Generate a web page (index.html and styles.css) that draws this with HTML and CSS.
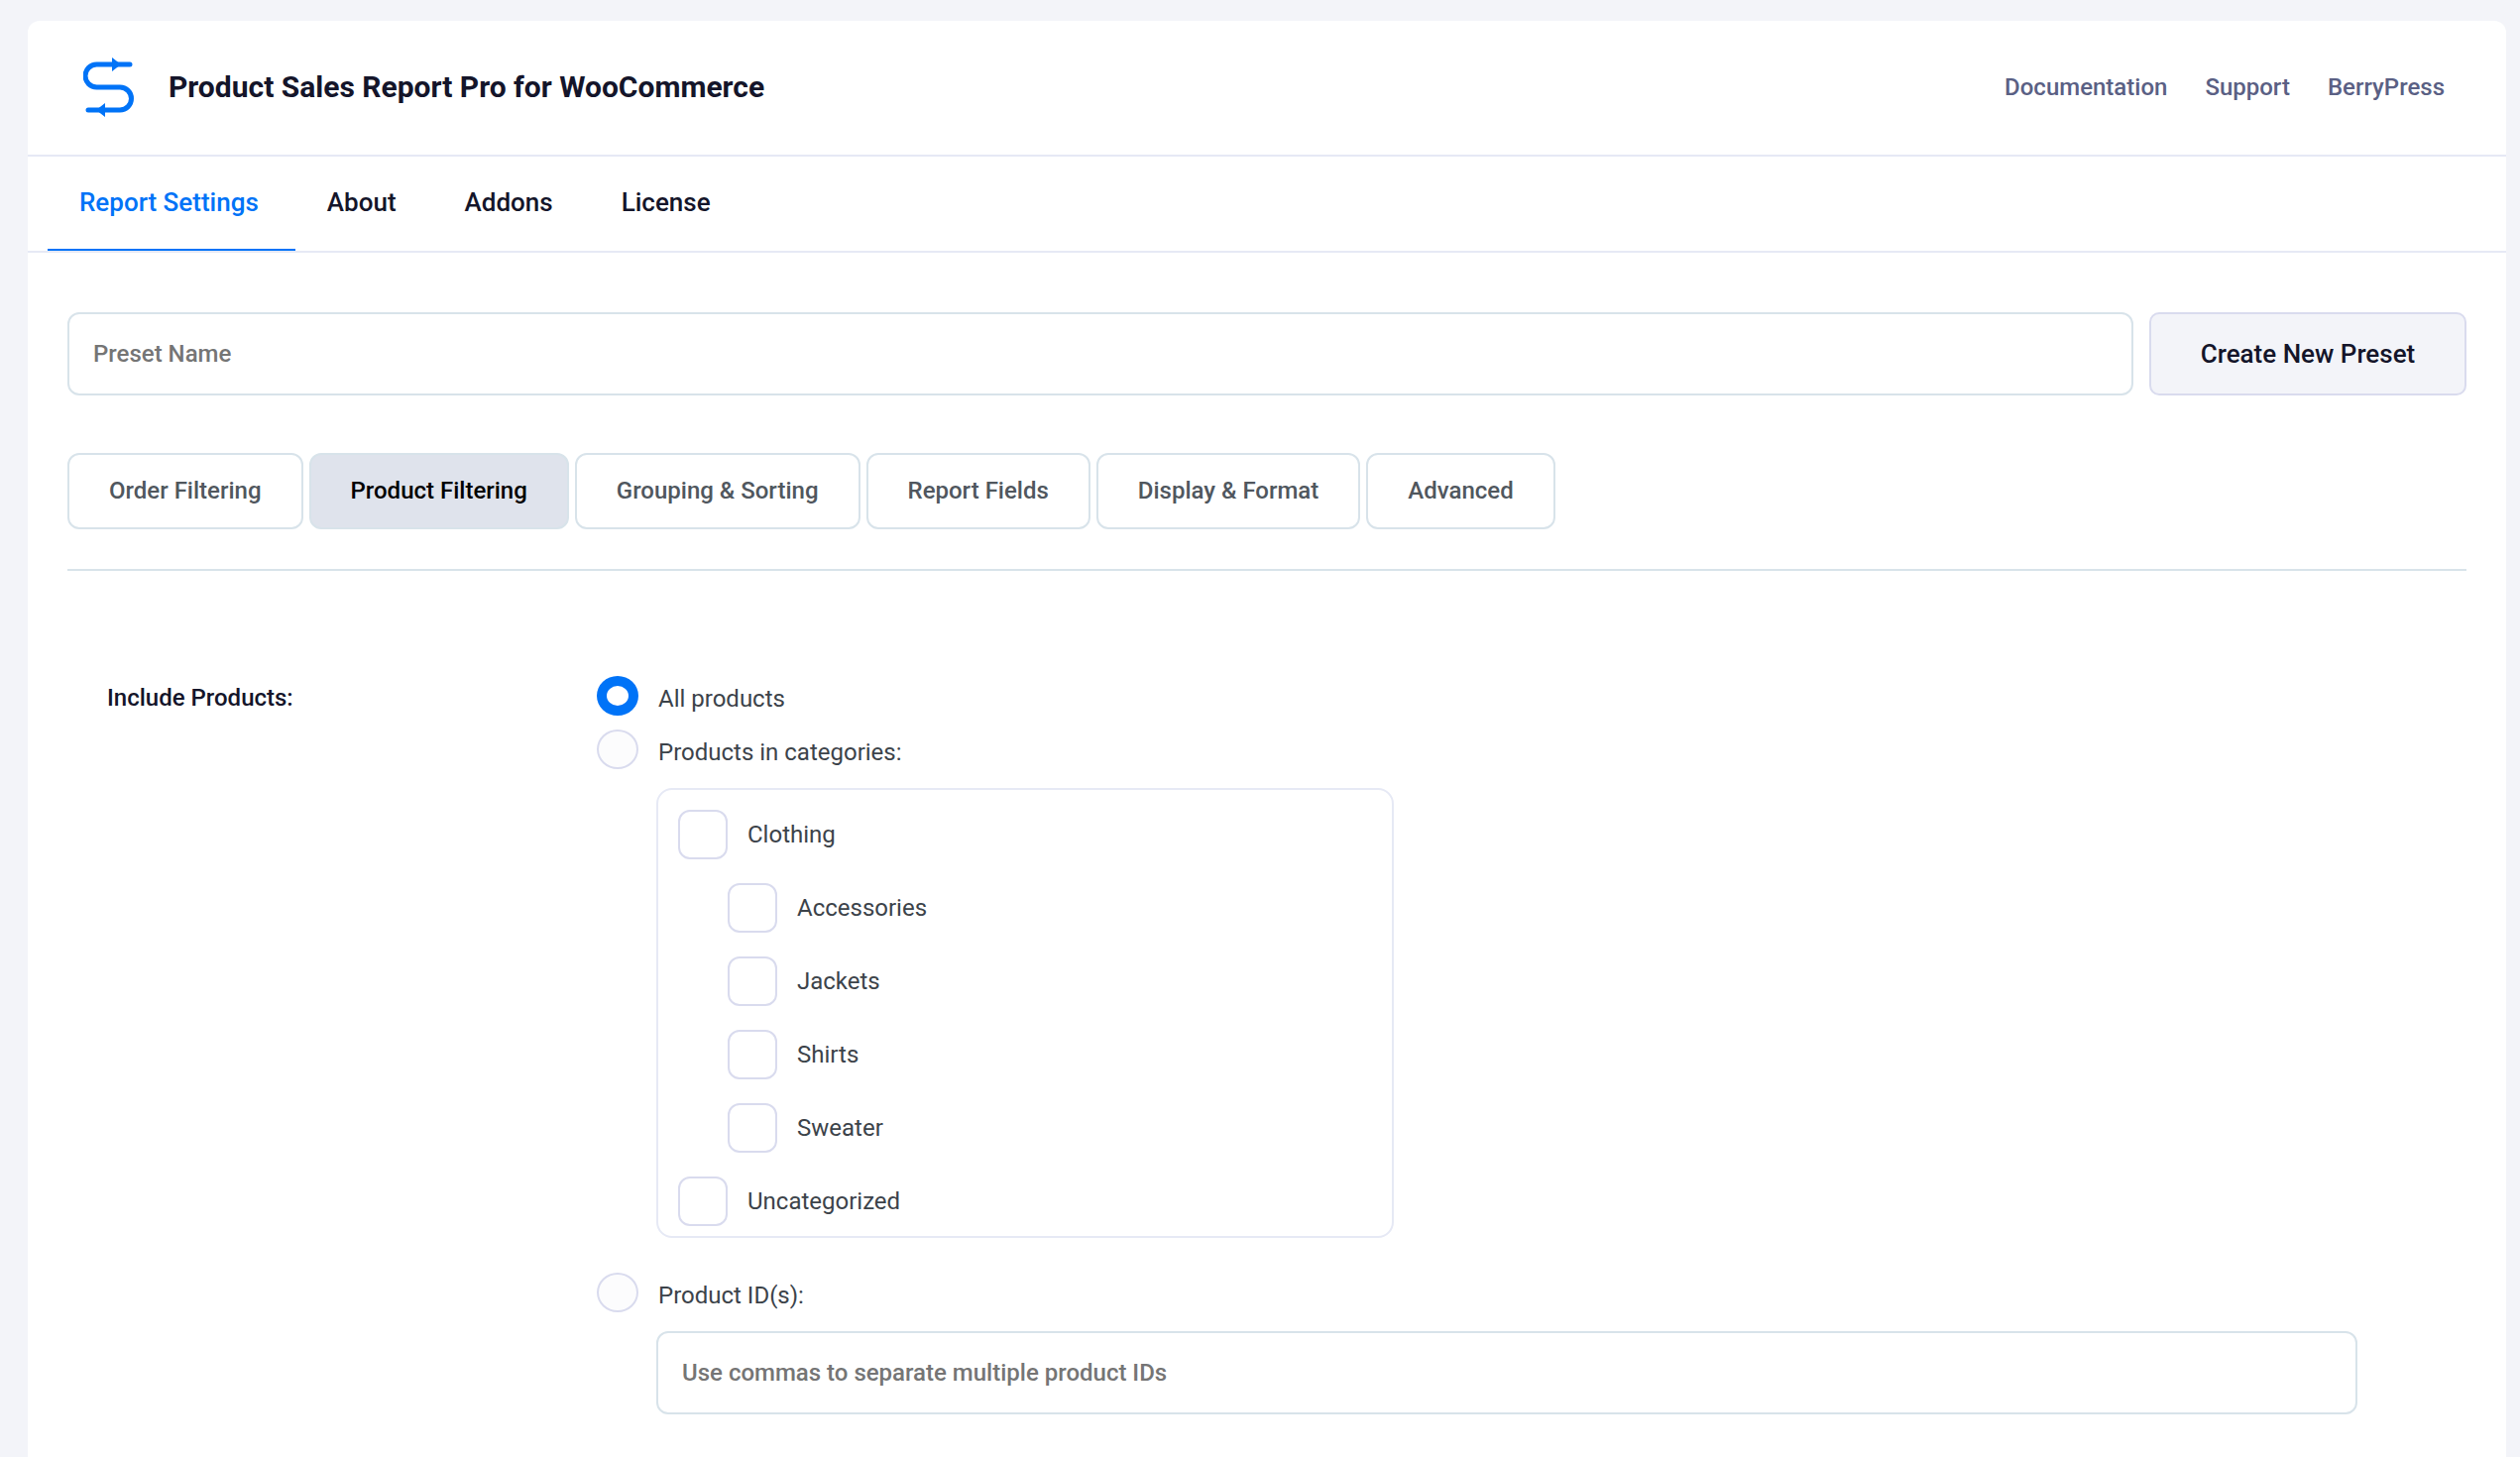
FILE: index.html
```
<!DOCTYPE html>
<html lang="en">
  <head>
    <meta charset="UTF-8">
    <title>Product Sales Report Pro for WooCommerce</title>
    <link rel="stylesheet" href="styles.css">
  </head>
  <body>
    <div class="panel">
      <header class="header">
        <svg class="logo" viewBox="0 0 52 60" aria-hidden="true">
          <path d="M47 7H13.500a11.500 11.500 0 0 0 0 23H37a11.500 11.500 0 0 1 0 23H5" fill="none" stroke="#0073f7" stroke-width="5" stroke-linecap="round"/>
          <path d="M29 0l9 7-9 7zM22 46l-9 7 9 7z" fill="#0073f7"/>
        </svg>
        <h1>Product Sales Report Pro for WooCommerce</h1>
        <div class="header-links">
          <a href="#">Documentation</a>
          <a href="#">Support</a>
          <a href="#">BerryPress</a>
        </div>
      </header>

      <nav class="tabs">
        <a href="#" class="active">Report Settings</a>
        <a href="#">About</a>
        <a href="#">Addons</a>
        <a href="#">License</a>
      </nav>

      <form class="content">
        <div class="preset">
          <input type="text" class="text-input" placeholder="Preset Name" aria-label="Preset Name">
          <button type="button" class="preset-button">Create New Preset</button>
        </div>

        <div class="sections">
          <button type="button">Order Filtering</button>
          <button type="button" class="active">Product Filtering</button>
          <button type="button">Grouping &amp; Sorting</button>
          <button type="button">Report Fields</button>
          <button type="button">Display &amp; Format</button>
          <button type="button">Advanced</button>
        </div>

        <div class="field" role="radiogroup" aria-labelledby="include">
          <div class="field-label" id="include">Include Products:</div>
          <div class="field-body">
            <label class="radio"><input type="radio" name="products" value="all" checked>All products</label>
            <label class="radio"><input type="radio" name="products" value="cats">Products in categories:</label>
            <ul class="categories">
              <li><label><input type="checkbox">Clothing</label>
                <ul>
                  <li><label><input type="checkbox">Accessories</label></li>
                  <li><label><input type="checkbox">Jackets</label></li>
                  <li><label><input type="checkbox">Shirts</label></li>
                  <li><label><input type="checkbox">Sweater</label></li>
                </ul>
              </li>
              <li><label><input type="checkbox">Uncategorized</label></li>
            </ul>
            <label class="radio"><input type="radio" name="products" value="ids">Product ID(s):</label>
            <input type="text" class="text-input product-ids" placeholder="Use commas to separate multiple product IDs" aria-label="Product IDs">
          </div>
        </div>
      </form>
    </div>
  </body>
</html>
```

FILE: styles.css
```
* {
  box-sizing: border-box;
}
body {
  margin: 0;
  padding: 21px 14px 0 28px;
  background: #f3f4f9;
  color: #3c434a;
  font-family: Roboto, sans-serif;
  font-size: 24px;
  line-height: 36px;
}
a {
  text-decoration: none;
}
ul {
  margin: 0;
  padding: 0;
  list-style: none;
}
input, button {
  margin: 0;
  font-family: inherit;
}
.panel {
  min-height: calc(100vh - 21px);
  background: #fff;
  border-radius: 12px 12px 0 0;
}

/* header */
.header {
  display: flex;
  align-items: center;
  height: 137px;
  padding: 0 62px 2px 56px;
  border-bottom: 2px solid #e6e9f5;
}
.logo {
  width: 52px;
  height: 60px;
}
.header h1 {
  margin: 0 auto 0 34px;
  color: #14152a;
  font-size: 30px;
  font-weight: 700;
}
.header-links {
  display: flex;
  gap: 38px;
}
.header-links a {
  color: #5a6084;
  font-weight: 500;
}

/* main tabs */
.tabs {
  display: flex;
  height: 97px;
  padding: 0 20px;
  border-bottom: 2px solid #e6e9f5;
}
.tabs a {
  padding: 28px 37px 0 32px;
  color: #14152a;
  font-size: 26px;
  font-weight: 500;
}
.tabs .active {
  color: #0073f7;
  border-bottom: 2px solid #0073f7;
}

.content {
  padding: 60px 40px 42px;
}
.text-input {
  width: 100%;
  height: 84px;
  padding: 0 24px;
  border: 2px solid #d8e3ea;
  border-radius: 12px;
  background: #fff;
  font-size: 24px;
  font-weight: 500;
}
.text-input::placeholder {
  color: #757575;
}
.preset {
  display: flex;
  gap: 16px;
}
.preset-button {
  flex: 0 0 320px;
  border: 2px solid #d9dbee;
  border-radius: 10px;
  background: #f3f4f9;
  color: #14152a;
  font-size: 26px;
  font-weight: 500;
}

/* report sections */
.sections {
  display: flex;
  gap: 6px;
  padding: 58px 0 40px;
  border-bottom: 2px solid #d8e3ea;
}
.sections button {
  height: 77px;
  padding: 0 40px 2px;
  border: 2px solid #d8e3ea;
  border-radius: 12px;
  background: #fff;
  color: #50575e;
  font-size: 24px;
  font-weight: 500;
}
.sections .active {
  background: #dfe3ec;
  color: #000;
}

/* fields */
.field {
  display: grid;
  grid-template-columns: 494px 1fr;
  padding: 106px 110px 0 40px;
}
.field-label {
  color: #14152a;
  font-weight: 500;
  line-height: 44px;
}
.radio {
  display: flex;
  gap: 20px;
  margin-bottom: 8px;
  line-height: 46px;
}
.radio input {
  appearance: none;
  width: 42px;
  height: 40px;
  border: 2px solid #d9dbee;
  border-radius: 50%;
  background: #fcfcfd;
}
.radio input:checked {
  border: 10px solid #0073f7;
  background: #fff;
}
.radio:has(+ .categories),
.radio:has(+ .product-ids) {
  margin-bottom: 13px;
}

/* category tree */
.categories {
  width: 744px;
  margin: 0 0 35px 60px;
  padding: 20px 20px 10px;
  border: 2px solid #e6e9f5;
  border-radius: 16px;
}
.categories ul {
  margin: 24px 0 24px 50px;
}
.categories ul li + li {
  margin-top: 24px;
}
.categories label {
  display: flex;
  align-items: center;
  gap: 20px;
}
.categories input {
  appearance: none;
  width: 50px;
  height: 50px;
  border: 2px solid #d9dbee;
  border-radius: 12px;
  background: #fff;
}
.product-ids {
  display: block;
  width: calc(100% - 60px);
  margin-left: 60px;
}
```
